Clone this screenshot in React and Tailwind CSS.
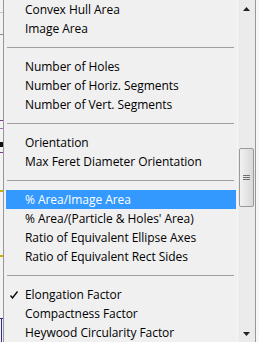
import React from "react";

const rows = [
  { t: "Convex Hull Area" },
  { t: "Image Area" },
  { sep: true },
  { t: "Number of Holes" },
  { t: "Number of Horiz. Segments" },
  { t: "Number of Vert. Segments" },
  { sep: true },
  { t: "Orientation" },
  { t: "Max Feret Diameter Orientation" },
  { sep: true },
  { t: "% Area/Image Area", hl: true },
  { t: "% Area/(Particle & Holes' Area)" },
  { t: "Ratio of Equivalent Ellipse Axes" },
  { t: "Ratio of Equivalent Rect Sides" },
  { sep: true },
  { t: "Elongation Factor", check: true },
  { t: "Compactness Factor" },
  { t: "Heywood Circularity Factor" },
];

function Strip() {
  return (
    <svg width="3" height="342" className="block shrink-0">
      <rect x="0" y="0" width="3" height="342" fill="#f3f3f3" />
      <rect x="0" y="12" width="3" height="1" fill="#c8c8c8" />
      <rect x="0" y="34" width="3" height="1" fill="#8c8c8c" />
      <rect x="0" y="120" width="3" height="1" fill="#7a3d8a" />
      <rect x="0" y="128" width="3" height="1" fill="#a070b0" />
      <rect x="0" y="142" width="3" height="5" fill="#111" />
      <rect x="0" y="152" width="3" height="1" fill="#7a3d8a" />
      <rect x="0" y="190" width="3" height="2" fill="#c8b400" />
      <rect x="0" y="255" width="3" height="2" fill="#c8b400" />
      <rect x="0" y="318" width="3" height="1" fill="#2b2b8c" />
      <rect x="1" y="318" width="1" height="24" fill="#2b2b8c" />
    </svg>
  );
}

function Check() {
  return (
    <svg width="8" height="8" viewBox="0 0 8 8" className="block">
      <path d="M0.5 4.5 L2.5 7 L7.5 0.5" fill="none" stroke="#000" strokeWidth="1.3" />
    </svg>
  );
}

export default function App() {
  return (
    <div
      className="w-[259px] h-[342px] flex overflow-hidden bg-[#f0f0f0] text-black"
      style={{ fontFamily: '"Open Sans", "Noto Sans", sans-serif' }}
    >
      <Strip />
      <div className="w-px shrink-0 bg-[#979797]" />
      <div className="w-[233px] shrink-0 flex flex-col">
        {rows.map((r, i) =>
          r.sep ? (
            <div key={i} className="h-[19px] flex items-center pl-[3px] pr-[3px]">
              <div className="w-full h-px bg-[#a0a0a0]" />
            </div>
          ) : (
            <div
              key={i}
              className={
                "h-[19px] flex items-center ml-[2px] mr-[1px] " +
                (r.hl ? "bg-[#3399ff] text-white" : "")
              }
            >
              <div className="w-[20px] shrink-0 flex justify-start pl-[4px]">
                {r.check ? <Check /> : null}
              </div>
              <span className="text-[12px] leading-none whitespace-nowrap tracking-[-0.05px] -ml-px">
                {r.t}
              </span>
            </div>
          )
        )}
      </div>
      <div className="w-[18px] shrink-0 bg-[#ebebeb] border-l border-[#f6f6f6] flex flex-col">
        <div className="h-[17px] flex items-center justify-center">
          <svg width="7" height="4" viewBox="0 0 7 4" className="block">
            <path d="M3.5 0 L7 4 L0 4 Z" fill="#222" />
          </svg>
        </div>
        <div className="flex-1 flex flex-col">
          <div className="h-[131px]" />
          <div className="h-[59px] w-[15px] ml-px rounded-[2px] border border-[#9a9a9a] bg-gradient-to-r from-[#f2f2f2] to-[#d8d8d8] flex flex-col items-center justify-center gap-px">
            <div className="w-[7px] h-px bg-[#6f6f6f]" />
            <div className="w-[7px] h-px bg-[#6f6f6f]" />
            <div className="w-[7px] h-px bg-[#6f6f6f]" />
          </div>
          <div className="flex-1" />
        </div>
        <div className="h-[17px] flex items-center justify-center">
          <svg width="7" height="4" viewBox="0 0 7 4" className="block">
            <path d="M0 0 L7 0 L3.5 4 Z" fill="#222" />
          </svg>
        </div>
      </div>
      <div className="w-px shrink-0 bg-[#979797]" />
      <div className="w-[3px] shrink-0 bg-[#f7f7f7]" />
    </div>
  );
}
